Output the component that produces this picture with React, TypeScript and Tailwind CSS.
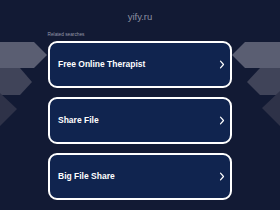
import React from "react";

const items = ["Free Online Therapist", "Share File", "Big File Share"];

function Chevron() {
  return (
    <svg width="6" height="9" viewBox="0 0 6 9" className="shrink-0">
      <polyline points="1.5,1.2 4.5,4.5 1.5,7.8" fill="none" stroke="#ffffff" strokeWidth="1.2" strokeLinecap="round" strokeLinejoin="round" />
    </svg>
  );
}

function Backdrop() {
  return (
    <svg className="absolute inset-0" width="280" height="210" viewBox="0 0 280 210">
      <polygon points="0,42 34,42 47,55 34,68 0,68" fill="#5a5e72" />
      <polygon points="0,68 20,68 32,82 20,95 0,95" fill="#404459" />
      <polygon points="0,93 17,109 0,126" fill="#2e3248" />
      <polygon points="280,42 245,42 232,55 245,68 280,68" fill="#5a5e72" />
      <polygon points="280,68 260,68 247,82 260,95 280,95" fill="#404459" />
      <polygon points="280,91 262,108 280,126" fill="#2e3248" />
    </svg>
  );
}

export default function App() {
  return (
    <div className="relative w-[280px] h-[210px] overflow-hidden bg-[#121a34]" style={{ fontFamily: '"Liberation Sans", Arial, sans-serif' }}>
      <Backdrop />
      <div className="relative flex flex-col items-center pt-[11px]">
        <div className="h-[12px] leading-[12px] text-[9.5px] text-[#8b90a1]">yify.ru</div>
        <div className="w-[185px] mt-[9px] h-[6px] leading-[6px] text-[4.75px] text-[#9498a8]">Related searches</div>
        <div className="w-[184px] mt-[3px] flex flex-col gap-[9.5px]">
          {items.map((t) => (
            <div key={t} className="h-[46.5px] rounded-[9px] border-2 border-white bg-[#10244f] flex items-center justify-between pl-[8px] pr-[5.5px]">
              <span className="text-[8.5px] font-bold text-white">{t}</span>
              <Chevron />
            </div>
          ))}
        </div>
      </div>
    </div>
  );
}
